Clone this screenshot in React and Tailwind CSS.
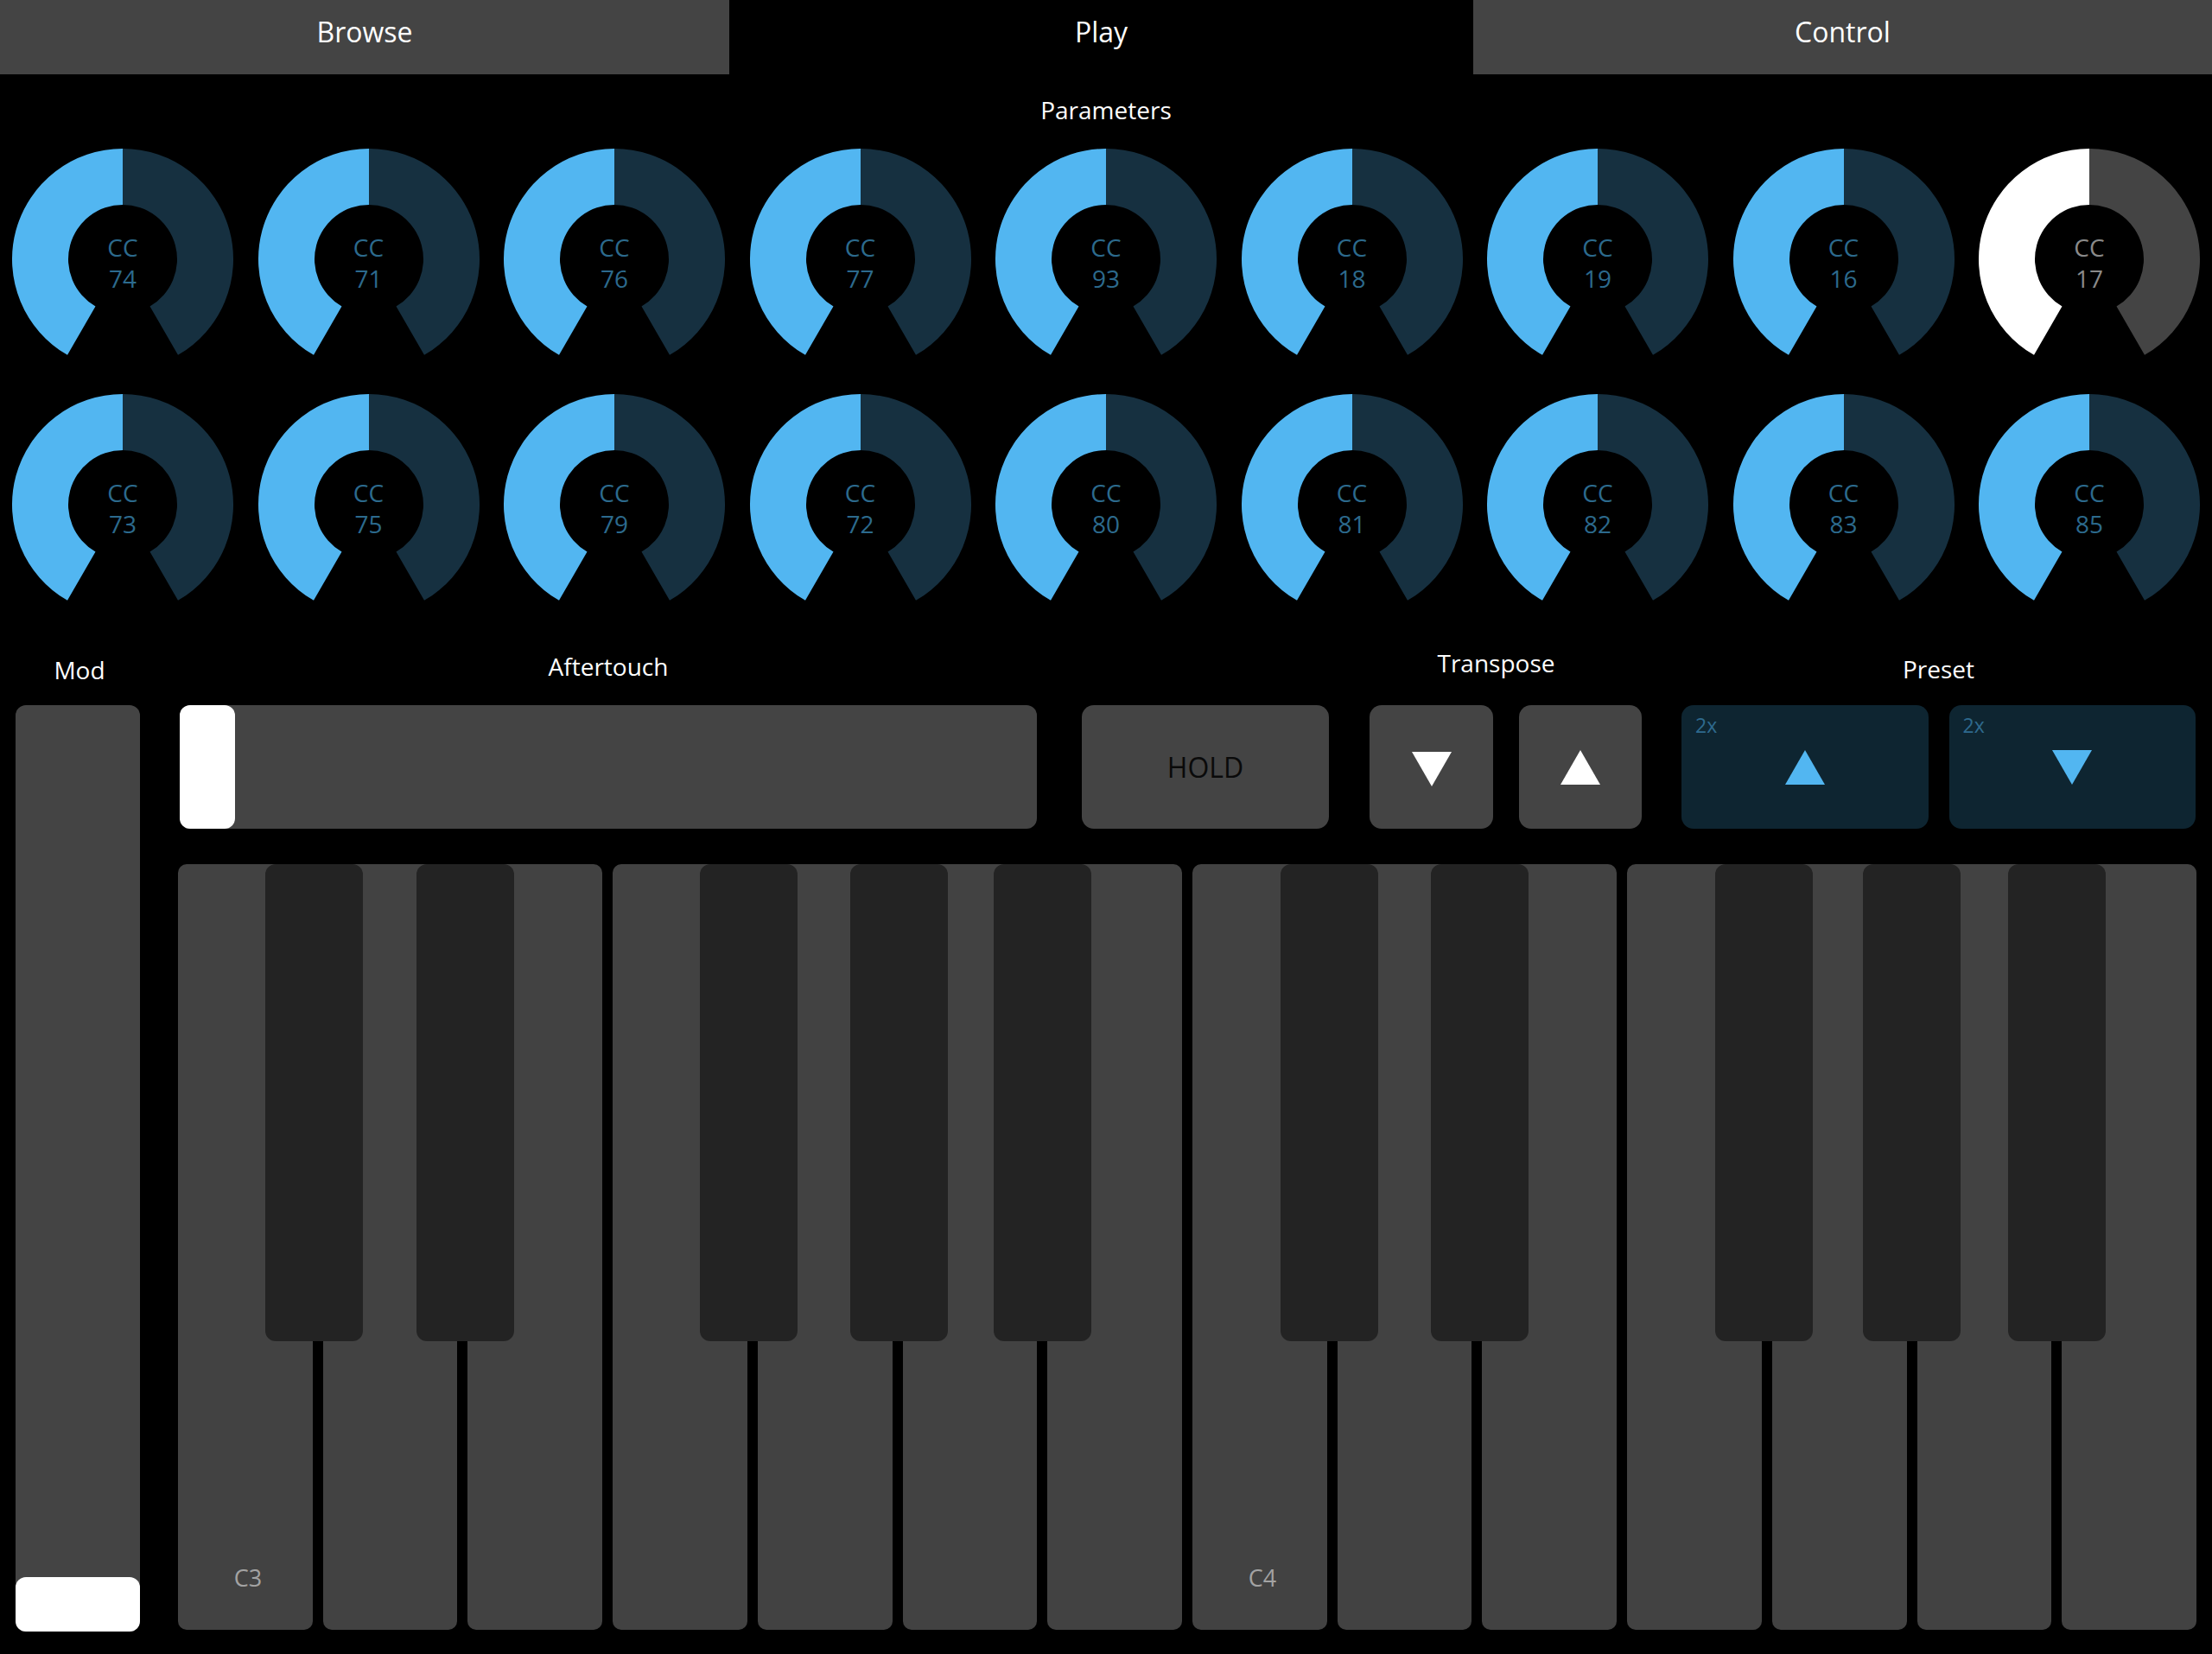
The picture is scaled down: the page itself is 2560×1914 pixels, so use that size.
import React from 'react'

const KNOBS_TOP = [74, 71, 76, 77, 93, 18, 19, 16, 17]
const KNOBS_BOTTOM = [73, 75, 79, 72, 80, 81, 82, 83, 85]

const BLACK_KEYS = [
  { i: 0, nudge: -4 },
  { i: 1, nudge: 3 },
  { i: 3, nudge: -4 },
  { i: 4, nudge: 2 },
  { i: 5, nudge: 0 },
  { i: 7, nudge: -3 },
  { i: 8, nudge: 3 },
  { i: 10, nudge: -3 },
  { i: 11, nudge: 0 },
  { i: 12, nudge: 0 },
]

const WHITE_LABELS = { 0: 'C3', 7: 'C4' }

function Knob({ cc, active }) {
  const fill = active ? '#ffffff' : '#52b6f1'
  const rest = active ? '#444444' : '#163040'
  return (
    <div className="relative w-[256px] h-[256px]">
      <svg width="256" height="256" viewBox="0 0 256 256" className="block">
        <path d="M 64 238.85 A 128 128 0 0 1 128 0 L 128 65 A 63 63 0 0 0 96.5 182.56 Z" fill={fill} />
        <path d="M 128 0 A 128 128 0 0 1 192 238.85 L 159.5 182.56 A 63 63 0 0 0 128 65 Z" fill={rest} />
      </svg>
      <div
        className={`absolute inset-0 flex flex-col items-center justify-center pt-[8px] text-[28px] leading-[36px] ${
          active ? 'text-[#8a8a8a]' : 'text-[#2c6a8d]'
        }`}
      >
        <span>CC</span>
        <span>{cc}</span>
      </div>
    </div>
  )
}

function Triangle({ up, color }) {
  return (
    <svg width="46" height="40" viewBox="0 0 46 40" className="block">
      {up ? <polygon points="23,0 46,40 0,40" fill={color} /> : <polygon points="0,0 46,0 23,40" fill={color} />}
    </svg>
  )
}

function Label({ children, className = '' }) {
  return <div className={`h-[71px] text-center text-white text-[28px] leading-[36px] ${className}`}>{children}</div>
}

export default function App() {
  const keyW = (2336 - 13 * 12) / 14
  const pitch = keyW + 12

  return (
    <div className="w-full h-screen bg-black overflow-hidden flex flex-col font-['Open_Sans',sans-serif]">
      <div className="grid grid-cols-[844px_861px_1fr] h-[86px] text-[32px] text-white">
        <div className="bg-[#444444] flex items-center justify-center pb-[12px]">Browse</div>
        <div className="bg-black flex items-center justify-center pb-[12px]">Play</div>
        <div className="bg-[#444444] flex items-center justify-center pb-[12px]">Control</div>
      </div>

      <div className="mt-[23px] text-center text-white text-[28px] leading-[36px]">Parameters</div>

      <div className="mt-[27px] px-[14px] flex flex-col gap-[28px]">
        <div className="flex justify-between">
          {KNOBS_TOP.map((cc) => (
            <Knob key={cc} cc={cc} active={cc === 17} />
          ))}
        </div>
        <div className="flex justify-between">
          {KNOBS_BOTTOM.map((cc) => (
            <Knob key={cc} cc={cc} />
          ))}
        </div>
      </div>

      <div className="mt-[33px] px-[18px] flex">
        {/* Mod wheel */}
        <div className="w-[144px] flex flex-col">
          <Label className="pt-[12px] pl-[4px]">Mod</Label>
          <div className="h-[1072px] bg-[#444444] rounded-[12px] flex flex-col justify-end">
            <div className="h-[63px] bg-white rounded-[12px]" />
          </div>
        </div>

        <div className="ml-[44px] w-[2336px] flex flex-col">
          <div className="flex">
            <div className="ml-[2px] w-[992px] flex flex-col">
              <Label className="pt-[8px]">Aftertouch</Label>
              <div className="h-[143px] bg-[#444444] rounded-[12px] flex">
                <div className="w-[64px] h-full bg-white rounded-[12px]" />
              </div>
            </div>

            <div className="ml-[52px] w-[286px] flex flex-col">
              <Label />
              <div className="h-[143px] bg-[#444444] rounded-[14px] flex items-center justify-center text-[32px] text-[#0a0a0a]">
                HOLD
              </div>
            </div>

            <div className="ml-[47px] w-[315px] flex flex-col">
              <Label className="pt-[4px] pr-[22px]">Transpose</Label>
              <div className="flex gap-[30px]">
                <div className="w-[143px] h-[143px] bg-[#444444] rounded-[14px] flex items-center justify-center pt-[4px]">
                  <Triangle color="#ffffff" />
                </div>
                <div className="w-[142px] h-[143px] bg-[#444444] rounded-[14px] flex items-center justify-center">
                  <Triangle up color="#ffffff" />
                </div>
              </div>
            </div>

            <div className="ml-[46px] w-[595px] flex flex-col">
              <Label className="pt-[11px]">Preset</Label>
              <div className="flex gap-[24px]">
                {[true, false].map((up) => (
                  <div
                    key={String(up)}
                    className="relative w-[286px] h-[143px] bg-[#0e2531] rounded-[14px] flex items-center justify-center"
                  >
                    <span className="absolute left-[16px] top-[8px] text-[23px] leading-[30px] text-[#2e6a8e]">2x</span>
                    <Triangle up={up} color="#52b6f1" />
                  </div>
                ))}
              </div>
            </div>
          </div>

          {/* Keyboard */}
          <div className="relative mt-[41px] h-[886px] flex gap-[12px]">
            {Array.from({ length: 14 }).map((_, i) => (
              <div key={i} className="flex-1 bg-[#424242] rounded-[10px] flex flex-col justify-end items-center pb-[42px]">
                {WHITE_LABELS[i] && <span className="text-[27px] leading-[36px] text-[#a3a3a3] pl-[6px]">{WHITE_LABELS[i]}</span>}
              </div>
            ))}
            {BLACK_KEYS.map(({ i, nudge }) => (
              <div
                key={i}
                className="absolute top-0 w-[113px] h-[552px] bg-[#232323] rounded-[12px]"
                style={{ left: `${(i + 1) * pitch - 6 - 56.5 + nudge}px` }}
              />
            ))}
          </div>
        </div>
      </div>
    </div>
  )
}
